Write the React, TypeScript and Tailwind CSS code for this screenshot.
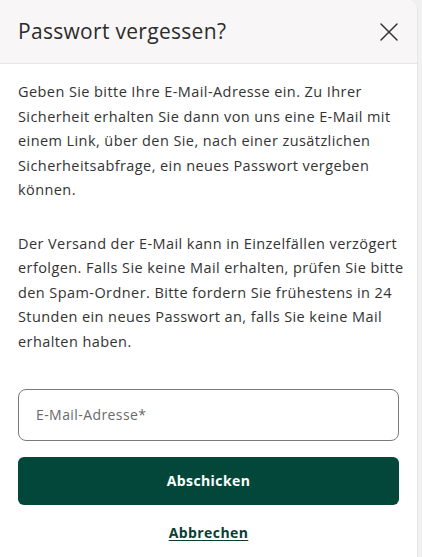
import React from "react";

const p1 = [
  "Geben Sie bitte Ihre E-Mail-Adresse ein. Zu Ihrer",
  "Sicherheit erhalten Sie dann von uns eine E-Mail mit",
  "einem Link, über den Sie, nach einer zusätzlichen",
  "Sicherheitsabfrage, ein neues Passwort vergeben",
  "können.",
];
const p2 = [
  "Der Versand der E-Mail kann in Einzelfällen verzögert",
  "erfolgen. Falls Sie keine Mail erhalten, prüfen Sie bitte",
  "den Spam-Ordner. Bitte fordern Sie frühestens in 24",
  "Stunden ein neues Passwort an, falls Sie keine Mail",
  "erhalten haben.",
];

export default function App() {
  return (
    <div className="w-[422px] h-[557px] bg-[#f1f1f1] overflow-hidden" style={{ fontFamily: '"Open Sans", "Noto Sans", sans-serif' }}>
      <div className="w-[418px] h-full bg-white rounded-tr-[10px] border-r border-[#e6e6e6] flex flex-col overflow-hidden">
        <div className="h-[64px] shrink-0 bg-[#f8f6f6] border-b border-[#e7e5e5] flex items-center justify-between pl-[18px] pr-[18px]">
          <h1 className="text-[21px] text-[#2c2c2c] font-normal tracking-[0.3px]">Passwort vergessen?</h1>
          <svg width="20" height="20" viewBox="0 0 20 20" className="text-[#333]">
            <path d="M2 2 L18 18 M18 2 L2 18" stroke="currentColor" strokeWidth="1.5" fill="none" strokeLinecap="round" />
          </svg>
        </div>
        <div className="px-[18px] pt-[16px] text-[14.5px] leading-[24.5px] text-[#333] tracking-[0.42px]">
          <p>
            {p1.map((l, i) => (
              <span key={i} className="block whitespace-nowrap">{l}</span>
            ))}
          </p>
          <p className="mt-[29px]">
            {p2.map((l, i) => (
              <span key={i} className="block whitespace-nowrap">{l}</span>
            ))}
          </p>
          <div className="mt-[35px] h-[52px] rounded-[8px] border border-[#7a7a7a] flex items-center px-[17px] text-[#6a6a6a] text-[14px]">
            E-Mail-Adresse*
          </div>
          <button className="mt-[16px] w-full h-[48px] rounded-[6px] bg-[#03473b] text-white font-bold text-[14px] flex items-center justify-center">
            Abschicken
          </button>
          <div className="mt-[16px] flex justify-center">
            <a className="text-[14px] font-bold text-[#0b3d33] underline underline-offset-2">Abbrechen</a>
          </div>
        </div>
      </div>
    </div>
  );
}
